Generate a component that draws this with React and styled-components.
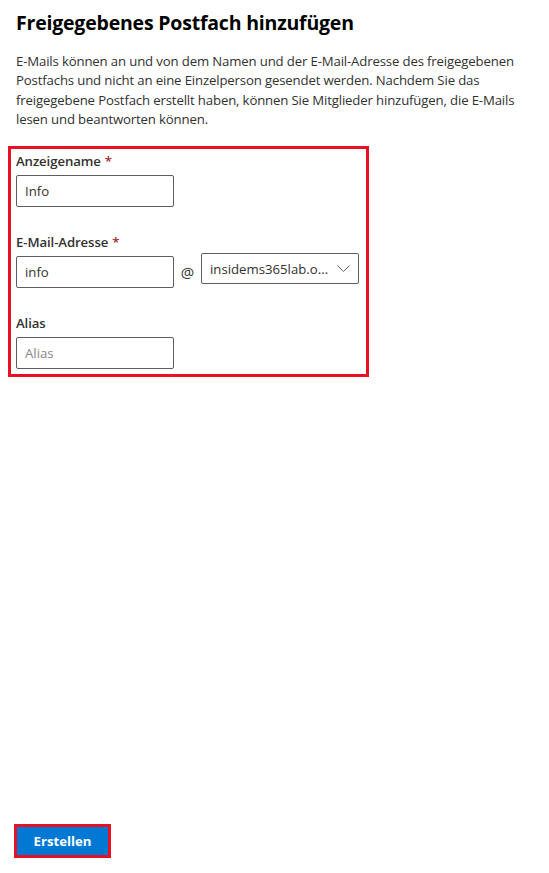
import React from "react";
import styled, { createGlobalStyle } from "styled-components";

const GlobalStyle = createGlobalStyle`
  html, body {
    margin: 0;
    padding: 0;
    background: #ffffff;
  }
  body {
    font-family: "Open Sans", "Noto Sans", Arial, sans-serif;
    color: #323130;
  }
`;

const Page = styled.div`
  width: 549px;
  height: 873px;
  box-sizing: border-box;
  display: flex;
  flex-direction: column;
  padding: 0 0 0 8px;
`;

const Title = styled.h1`
  margin: 9px 0 0 8px;
  font-size: 19.5px;
  line-height: 28px;
  font-weight: 700;
  color: #000;
  letter-spacing: -0.2px;
`;

const Description = styled.p`
  margin: 15px 0 0 8px;
  font-size: 13.2px;
  line-height: 19.3px;
  color: #323130;
  letter-spacing: -0.15px;
  width: 525px;
`;

const Highlight = styled.div`
  margin-top: 17px;
  width: 350px;
  height: 225px;
  border: 3px solid #e81123;
  box-sizing: content-box;
  padding: 0 0 0 5px;
  display: flex;
  flex-direction: column;
`;

const Field = styled.div`
  display: flex;
  flex-direction: column;
  margin-top: ${(p) => p.$top}px;
`;

const Label = styled.label`
  font-size: 13.2px;
  font-weight: 600;
  line-height: 20px;
  color: #323130;
  margin-bottom: 4px;
  letter-spacing: -0.1px;
`;

const Required = styled.span`
  color: #a4262c;
  margin-left: 4px;
`;

const Row = styled.div`
  display: flex;
  align-items: flex-start;
`;

const TextBox = styled.div`
  width: 158px;
  height: 32px;
  box-sizing: border-box;
  border: 1px solid #605e5c;
  border-radius: 2px;
  display: flex;
  align-items: center;
  padding: 0 8px;
  font-size: 13.2px;
  color: ${(p) => (p.$placeholder ? "#8a8886" : "#323130")};
`;

const At = styled.span`
  width: 27px;
  text-align: center;
  font-size: 15px;
  line-height: 32px;
  color: #323130;
`;

const Dropdown = styled.div`
  margin-top: -3px;
  width: 158px;
  height: 31px;
  box-sizing: border-box;
  border: 1px solid #605e5c;
  border-radius: 2px;
  display: flex;
  align-items: center;
  justify-content: space-between;
  padding: 0 8px 0 8px;
  font-size: 13.2px;
  color: #323130;
`;

const Chevron = styled.svg`
  width: 13px;
  height: 7px;
  flex-shrink: 0;
`;

const Spacer = styled.div`
  flex: 1;
`;

const Footer = styled.div`
  padding: 0 0 15px 6px;
`;

const PrimaryButton = styled.button`
  width: 97px;
  height: 34px;
  box-sizing: border-box;
  border: 3px solid #e81123;
  background: #0078d4;
  color: #ffffff;
  font-family: inherit;
  font-size: 13.2px;
  font-weight: 700;
  padding: 0;
  cursor: pointer;
`;

export default function App() {
  return (
    <>
      <GlobalStyle />
      <Page>
        <Title>Freigegebenes Postfach hinzufügen</Title>
        <Description>
          E-Mails können an und von dem Namen und der E-Mail-Adresse des
          freigegebenen Postfachs und nicht an eine Einzelperson gesendet
          werden. Nachdem Sie das freigegebene Postfach erstellt haben, können
          Sie Mitglieder hinzufügen, die E-Mails lesen und beantworten können.
        </Description>
        <Highlight>
          <Field $top={2}>
            <Label>
              Anzeigename<Required>*</Required>
            </Label>
            <TextBox>Info</TextBox>
          </Field>
          <Field $top={25}>
            <Label>
              E-Mail-Adresse<Required>*</Required>
            </Label>
            <Row>
              <TextBox>info</TextBox>
              <At>@</At>
              <Dropdown>
                <span>insidems365lab.o...</span>
                <Chevron viewBox="0 0 13 7">
                  <path d="M0.5 0.5 L6.5 6.5 L12.5 0.5" fill="none" stroke="#605e5c" strokeWidth="1" />
                </Chevron>
              </Dropdown>
            </Row>
          </Field>
          <Field $top={25}>
            <Label>Alias</Label>
            <TextBox $placeholder>Alias</TextBox>
          </Field>
        </Highlight>
        <Spacer />
        <Footer>
          <PrimaryButton>Erstellen</PrimaryButton>
        </Footer>
      </Page>
    </>
  );
}
